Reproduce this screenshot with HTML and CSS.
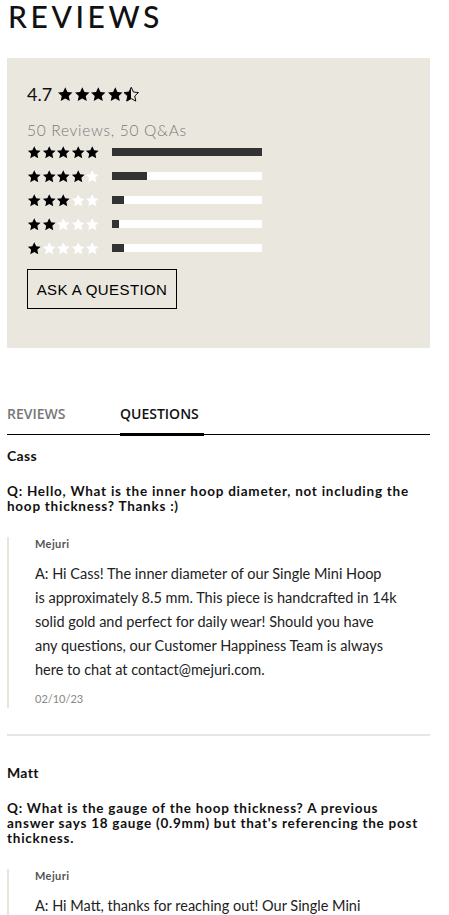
FILE: index.html
```html
<!DOCTYPE html>
<html>
<head>
<meta charset="utf-8">
<link rel="stylesheet" href="styles.css">
</head>
<body>
<svg width="0" height="0" class="defs">
  <defs>
    <symbol id="star" viewBox="0 0 24 24"><path d="M12 1.5l3.2 6.9 7.3.8-5.4 5 1.5 7.4L12 17.9l-6.6 3.7 1.5-7.4-5.4-5 7.3-.8z"/></symbol>
    <linearGradient id="half"><stop offset="50%" stop-color="#000"/><stop offset="50%" stop-color="#eae7df" stop-opacity="0"/></linearGradient>
  </defs>
</svg>
<h1 class="title">REVIEWS</h1>
<section class="summary">
  <div class="avg">
    <span class="avg-num">4.7</span>
    <span class="avg-stars">
      <svg class="s"><use href="#star"/></svg><svg class="s"><use href="#star"/></svg><svg class="s"><use href="#star"/></svg><svg class="s"><use href="#star"/></svg><svg class="s half" viewBox="0 0 24 24"><path d="M12 1.5l3.2 6.9 7.3.8-5.4 5 1.5 7.4L12 17.9l-6.6 3.7 1.5-7.4-5.4-5 7.3-.8z" fill="url(#half)" stroke="#000" stroke-width="1.4"/></svg>
    </span>
  </div>
  <div class="count">50 Reviews, 50 Q&amp;As</div>
  <div class="dist">
    <div class="row"><span class="rs"><svg class="f"><use href="#star"/></svg><svg class="f"><use href="#star"/></svg><svg class="f"><use href="#star"/></svg><svg class="f"><use href="#star"/></svg><svg class="f"><use href="#star"/></svg></span><span class="bar"><span class="fill" style="width:100%"></span></span></div>
    <div class="row"><span class="rs"><svg class="f"><use href="#star"/></svg><svg class="f"><use href="#star"/></svg><svg class="f"><use href="#star"/></svg><svg class="f"><use href="#star"/></svg><svg class="e"><use href="#star"/></svg></span><span class="bar"><span class="fill" style="width:23.5%"></span></span></div>
    <div class="row"><span class="rs"><svg class="f"><use href="#star"/></svg><svg class="f"><use href="#star"/></svg><svg class="f"><use href="#star"/></svg><svg class="e"><use href="#star"/></svg><svg class="e"><use href="#star"/></svg></span><span class="bar"><span class="fill" style="width:8%"></span></span></div>
    <div class="row"><span class="rs"><svg class="f"><use href="#star"/></svg><svg class="f"><use href="#star"/></svg><svg class="e"><use href="#star"/></svg><svg class="e"><use href="#star"/></svg><svg class="e"><use href="#star"/></svg></span><span class="bar"><span class="fill" style="width:4.7%"></span></span></div>
    <div class="row"><span class="rs"><svg class="f"><use href="#star"/></svg><svg class="e"><use href="#star"/></svg><svg class="e"><use href="#star"/></svg><svg class="e"><use href="#star"/></svg><svg class="e"><use href="#star"/></svg></span><span class="bar"><span class="fill" style="width:8%"></span></span></div>
  </div>
  <button class="ask">ASK A QUESTION</button>
</section>

<nav class="tabs">
  <span class="tab">REVIEWS</span>
  <span class="tab active">QUESTIONS</span>
</nav>

<article class="qa">
  <div class="author">Cass</div>
  <div class="question">Q: Hello, What is the inner hoop diameter, not including the hoop thickness? Thanks :)</div>
  <div class="answer">
    <div class="brand">Mejuri</div>
    <p class="atext">A: Hi Cass! The inner diameter of our Single Mini Hoop<br>is approximately 8.5 mm. This piece is handcrafted in 14k<br>solid gold and perfect for daily wear! Should you have<br>any questions, our Customer Happiness Team is always<br>here to chat at contact@mejuri.com.</p>
    <div class="date">02/10/23</div>
  </div>
</article>
<hr class="sep">
<article class="qa second">
  <div class="author">Matt</div>
  <div class="question">Q: What is the gauge of the hoop thickness? A previous<br>answer says 18 gauge (0.9mm) but that's referencing the post<br>thickness.</div>
  <div class="answer">
    <div class="brand">Mejuri</div>
    <p class="atext">A: Hi Matt, thanks for reaching out! Our Single Mini<br>Hoop is approximately 1.3 mm thick.</p>
  </div>
</article>
</body>
</html>
```
FILE: styles.css
```css
* { box-sizing: border-box; }
html, body { margin: 0; padding: 0; background: #fff; }
body {
  width: 449px;
  overflow: hidden;
  font-family: Lato, "Noto Sans", sans-serif;
  color: #111;
  padding: 0 19px 0 7px;
}
.defs { position: absolute; }
.title {
  margin: 0;
  padding: 0 0 0 1px;
  font-family: Lato, sans-serif;
  font-weight: 500;
  font-size: 30px;
  letter-spacing: 3.6px;
  line-height: 32px;
  height: 58px;
  color: #111;
}
.summary {
  background: #eae7df;
  height: 290px;
  padding: 25px 20px 0 20px;
}
.avg { display: flex; align-items: center; height: 22px; }
.avg-num { font-size: 18px; color: #111; margin-right: 5px; }
.avg-stars { display: flex; }
.avg-stars .s { width: 16.5px; height: 17px; fill: #000; }
.count {
  margin-top: 16px;
  font-size: 15.5px;
  font-weight: 300;
  letter-spacing: 0.7px;
  color: #7a7a78;
  height: 18px;
  line-height: 18px;
}
.dist { margin-top: 1px; }
.row { display: flex; align-items: center; height: 24px; }
.rs { display: flex; width: 85px; }
.rs svg { width: 14.5px; height: 15px; }
.rs .f { fill: #000; }
.rs .e { fill: #fff; }
.bar { display: block; width: 150px; height: 8px; background: #fff; }
.fill { display: block; height: 100%; background: #333; }
.ask {
  margin-top: 9px;
  width: 150px;
  height: 40px;
  background: transparent;
  border: 1px solid #000;
  font-family: "Liberation Sans", Arial, sans-serif;
  font-size: 15px;
  letter-spacing: 0.4px;
  color: #000;
  padding: 0;
}
.tabs {
  margin-top: 56px;
  display: flex;
  border-bottom: 1px solid #000;
  height: 31px;
}
.tab {
  font-family: "Open Sans", sans-serif;
  font-weight: 600;
  font-size: 14px;
  color: #777;
  line-height: 20px;
}
.tab:first-child { width: 113px; }
.tab.active {
  color: #111;
  border-bottom: 3px solid #000;
  height: 32px;
  width: 84px;
}
.qa { padding-top: 13px; }
.author { font-weight: 700; font-size: 14px; line-height: 16px; letter-spacing: 0.3px; }
.question {
  margin-top: 20px;
  font-weight: 700;
  font-size: 13.5px;
  line-height: 15px;
  letter-spacing: 0.75px;
  color: #111;
}
.answer {
  margin-top: 23px;
  border-left: 2px solid #e9e5dd;
  padding-left: 26px;
  padding-bottom: 2px;
}
.brand { font-size: 11px; font-weight: 700; color: #555; line-height: 14px; letter-spacing: 0.4px; }
.atext {
  margin: 11px 0 0 0;
  font-size: 14.5px;
  line-height: 24px;
  color: #222;
  white-space: nowrap;
}
.date { font-size: 11px; color: #888; margin-top: 10px; line-height: 14px; }
.sep {
  margin: 26px 0 0 0;
  border: 0;
  height: 2px;
  background: #e6e6e6;
}
.second { padding-top: 29px; }
```
